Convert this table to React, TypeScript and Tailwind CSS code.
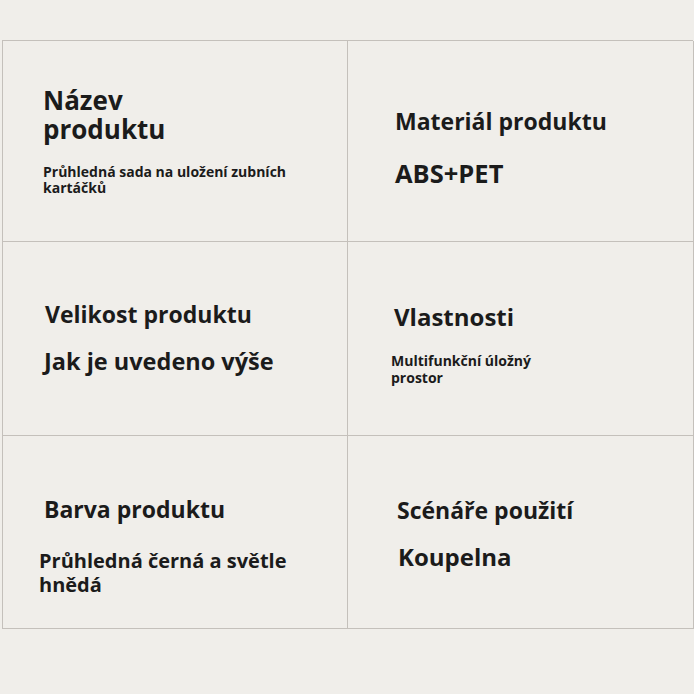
import React from "react";

const font = { fontFamily: '"Open Sans", "Noto Sans", sans-serif' };

export default function App() {
  return (
    <div className="w-[694px] h-[694px] bg-[#f0eeea] text-[#1b1b1b] pt-[40px] pl-[2px]" style={font}>
      <div className="w-[691px] grid grid-cols-[345px_346px] border-t border-l border-[#c4c0bb] font-bold">
        {/* Row 1 */}
        <div className="h-[201px] border-r border-b border-[#c4c0bb] pl-[40px] pt-[45px]">
          <div className="text-[26px] leading-[29px] w-[160px]">Název produktu</div>
          <div className="mt-[20px] text-[14px] leading-[16px] w-[260px]">Průhledná sada na uložení zubních kartáčků</div>
        </div>
        <div className="h-[201px] border-r border-b border-[#c4c0bb] pl-[47px] pt-[66px]">
          <div className="text-[23px] leading-[28px]">Materiál produktu</div>
          <div className="mt-[23px] text-[25.5px] leading-[30px]">ABS+PET</div>
        </div>
        {/* Row 2 */}
        <div className="h-[194px] border-r border-b border-[#c4c0bb] pl-[41px] pt-[58px]">
          <div className="text-[23px] leading-[28px] ml-[1px]">Velikost produktu</div>
          <div className="mt-[19px] text-[23.5px] leading-[28px]">Jak je uvedeno výše</div>
        </div>
        <div className="h-[194px] border-r border-b border-[#c4c0bb] pl-[43px] pt-[61px]">
          <div className="text-[24px] leading-[28px] ml-[3px]">Vlastnosti</div>
          <div className="mt-[21px] text-[14px] leading-[17px] w-[170px]">Multifunkční úložný prostor</div>
        </div>
        {/* Row 3 */}
        <div className="h-[193px] border-r border-b border-[#c4c0bb] pl-[36px] pt-[59px]">
          <div className="text-[23px] leading-[28px] ml-[5px]">Barva produktu</div>
          <div className="mt-[26px] text-[20px] leading-[24px] w-[280px]">Průhledná černá a světle hnědá</div>
        </div>
        <div className="h-[193px] border-r border-b border-[#c4c0bb] pl-[49px] pt-[60px]">
          <div className="text-[23px] leading-[28px]">Scénáře použití</div>
          <div className="mt-[19px] text-[24px] leading-[28px] ml-[1px]">Koupelna</div>
        </div>
      </div>
    </div>
  );
}
